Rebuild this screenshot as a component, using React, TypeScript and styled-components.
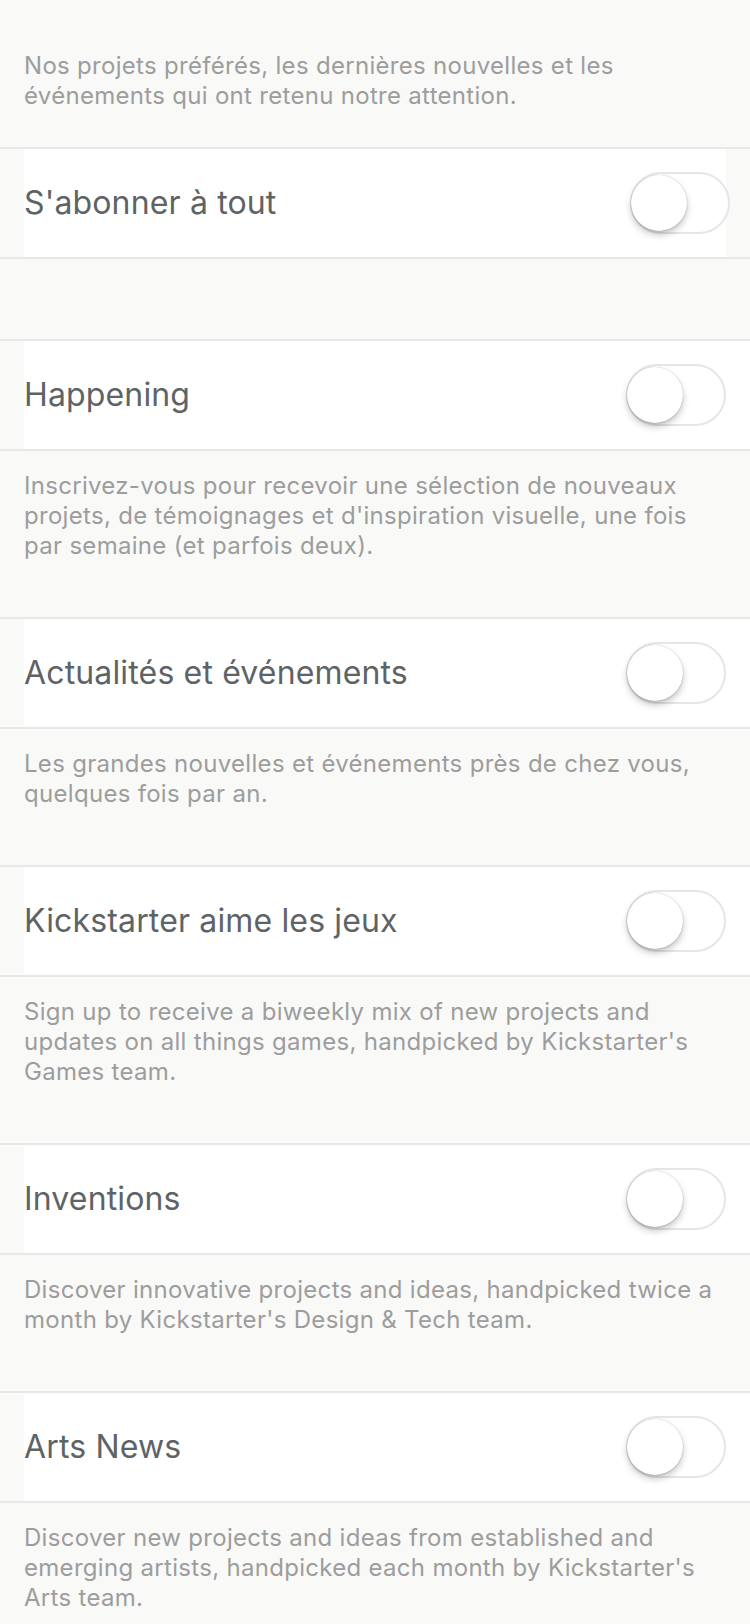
import React from "react";
import styled, { createGlobalStyle } from "styled-components";

const GlobalStyle = createGlobalStyle`
  html, body {
    margin: 0;
    padding: 0;
    background: #f9f9f8;
  }
  body {
    font-family: Inter, Roboto, "Noto Sans", sans-serif;
    -webkit-font-smoothing: antialiased;
  }
`;

const Page = styled.div`
  display: flex;
  flex-direction: column;
  width: 750px;
  min-height: 1624px;
  background: #f9f9f8;
`;

const Note = styled.p<{ $top?: number; $bottom?: number }>`
  margin: 0;
  padding: ${(p) => p.$top ?? 20}px 24px ${(p) => p.$bottom ?? 56}px 24px;
  font-size: 24px;
  line-height: 30px;
  color: #9d9d9d;
  letter-spacing: 0.3px;
`;

const Cell = styled.div<{ $inset?: boolean }>`
  display: flex;
  border-top: 2px solid #e8e8e8;
  border-bottom: 2px solid #e8e8e8;
  padding-left: 24px;
  padding-right: ${(p) => (p.$inset ? 24 : 0)}px;
  background: #f9f9f8;
`;

const CellBody = styled.div<{ $inset?: boolean }>`
  flex: 1;
  height: 108px;
  display: flex;
  align-items: center;
  justify-content: space-between;
  background: #ffffff;
  padding-right: ${(p) => (p.$inset ? 0 : 24)}px;
`;

const Title = styled.span`
  font-size: 32px;
  color: #5e6365;
  letter-spacing: 0.15px;
  margin-top: -1px;
`;

const Spacer = styled.div`
  height: 80px;
`;

const Track = styled.div<{ $shift?: number }>`
  position: relative;
  box-sizing: border-box;
  width: 100px;
  height: 62px;
  border-radius: 31px;
  border: 2px solid #e6e6e6;
  background: #ffffff;
  margin-right: ${(p) => -(p.$shift ?? 0)}px;
  flex-shrink: 0;
`;

const Knob = styled.div`
  position: absolute;
  left: -1px;
  top: 1px;
  width: 56px;
  height: 56px;
  border-radius: 50%;
  background: #ffffff;
  box-shadow: 0 4px 7px rgba(0, 0, 0, 0.22), 0 0 1px rgba(0, 0, 0, 0.25),
    0 1px 2px rgba(0, 0, 0, 0.1);
`;

const Toggle: React.FC<{ shift?: number }> = ({ shift }) => (
  <Track $shift={shift}>
    <Knob />
  </Track>
);

const Row: React.FC<{ title: string; inset?: boolean }> = ({ title, inset }) => (
  <Cell $inset={inset}>
    <CellBody $inset={inset}>
      <Title>{title}</Title>
      <Toggle shift={inset ? 4 : 0} />
    </CellBody>
  </Cell>
);

const items = [
  {
    title: "Happening",
    note: "Inscrivez-vous pour recevoir une sélection de nouveaux projets, de témoignages et d'inspiration visuelle, une fois par semaine (et parfois deux).",
  },
  {
    title: "Actualités et événements",
    note: "Les grandes nouvelles et événements près de chez vous, quelques fois par an.",
  },
  {
    title: "Kickstarter aime les jeux",
    note: "Sign up to receive a biweekly mix of new projects and updates on all things games, handpicked by Kickstarter's Games team.",
  },
  {
    title: "Inventions",
    note: "Discover innovative projects and ideas, handpicked twice a month by Kickstarter's Design & Tech team.",
  },
  {
    title: "Arts News",
    note: "Discover new projects and ideas from established and emerging artists, handpicked each month by Kickstarter's Arts team.",
  },
];

export default function App() {
  return (
    <>
      <GlobalStyle />
      <Page>
        <Note $top={51} $bottom={36}>
          Nos projets préférés, les dernières nouvelles et les événements qui ont retenu notre attention.
        </Note>
        <Row title="S'abonner à tout" inset />
        <Spacer />
        {items.map((it) => (
          <React.Fragment key={it.title}>
            <Row title={it.title} />
            <Note>{it.note}</Note>
          </React.Fragment>
        ))}
      </Page>
    </>
  );
}
